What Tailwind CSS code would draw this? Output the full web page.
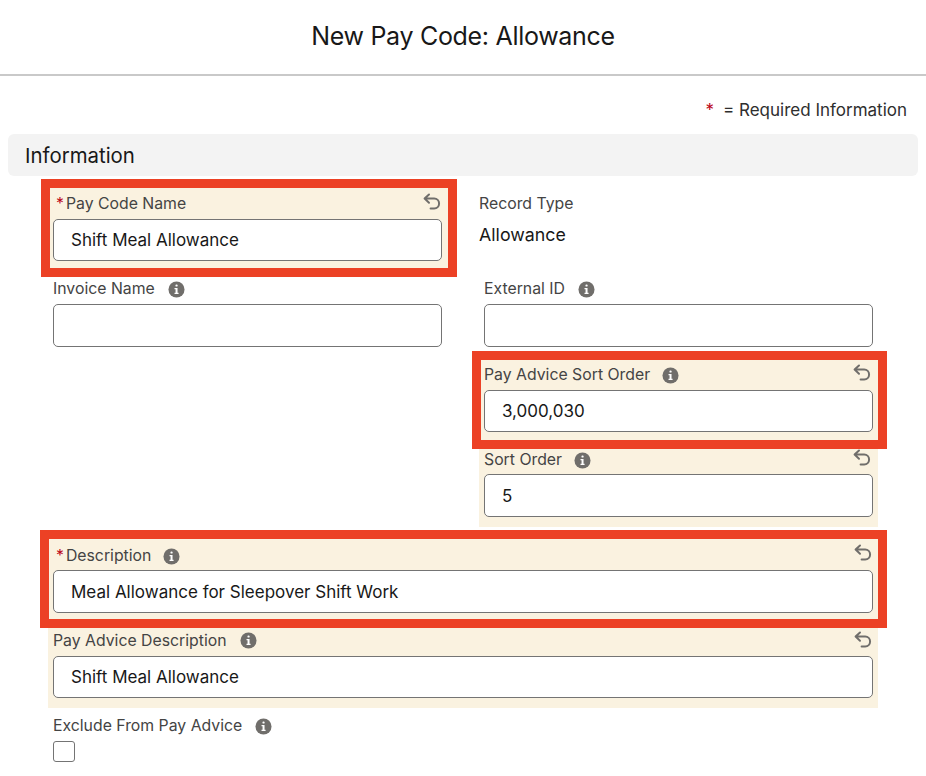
<!DOCTYPE html>
<html lang="en">
  <head>
    <meta charset="UTF-8" />
    <title>New Pay Code: Allowance</title>
    <script src="https://cdn.jsdelivr.net/npm/@tailwindcss/browser@4"></script>
  </head>
  <body class="bg-white font-['Inter',sans-serif] text-[#181818] overflow-hidden">
    <svg class="hidden">
      <symbol id="info" viewBox="0 0 18 18">
        <circle cx="9" cy="9" r="8.5" fill="#706e6b" />
        <rect x="7.9" y="3.6" width="2.3" height="2.3" rx="1" fill="#fff" />
        <path d="M6.9 7.4h3.2v5h1.1v1.3H6.9v-1.3H8v-3.7H6.9z" fill="#fff" />
      </symbol>
      <symbol id="undo" viewBox="0 0 18 18">
        <path d="M6 1.5 1.6 5.6 6 9.7M1.8 5.6h9.4a4.9 4.9 0 0 1 0 9.8H7.6" fill="none" stroke="#706e6b" stroke-width="2" stroke-linecap="round" stroke-linejoin="round" />
      </symbol>
    </svg>

    <header class="h-[76px] border-b-2 border-[#c9c9c9] flex items-center justify-center">
      <h1 class="text-[25px] tracking-[-0.3px]">New Pay Code: Allowance</h1>
    </header>

    <div class="h-[58px] pr-[19px] flex items-end justify-end pb-[12px] text-[17px] leading-[24px] text-[#2e2e2e]">
      <span class="text-[#ba0517] mr-[9px]">*</span>= Required Information
    </div>

    <section class="mx-[8px] h-[42px] px-[17px] pt-[3px] flex items-center bg-[#f3f3f3] rounded-[6px] text-[20.4px]">Information</section>

    <div class="ml-[48px] w-[830px] mt-[12px]">
      <div class="flex gap-[31px]">
        <!-- left column -->
        <div class="w-[400px]">
          <div class="relative bg-[#faf2e0] h-[80px] pl-[5px] pr-[6px]">
            <div class="h-[31px] pt-[1px] flex items-center text-[15.8px] text-[#444444]">
              <span class="text-[#ba0517] mr-[2px] ml-[3px]">*</span>Pay Code Name
            </div>
            <svg class="absolute right-[7px] top-[5px] w-[18px] h-[18px]"><use href="#undo" /></svg>
            <div class="h-[42px] px-[17px] pt-[2px] flex items-center bg-white border border-[#747474] rounded-[5px] text-[17px]">Shift Meal Allowance</div>
            <div class="absolute z-10 left-[-7px] right-[-9px] top-[-9px] bottom-[-9px] border-[9px] border-[#ec4125]"></div>
          </div>
          <div class="h-[92px] pl-[5px] pr-[6px]">
            <div class="h-[36px] pt-[6px] flex items-center text-[15.8px] text-[#444444]">
              Invoice Name
              <svg class="w-[17px] h-[17px] ml-[13px]"><use href="#info" /></svg>
            </div>
            <div class="h-[43px] bg-white border border-[#747474] rounded-[5px]"></div>
          </div>
        </div>

        <!-- right column -->
        <div class="w-[399px]">
          <div class="h-[80px]">
            <div class="h-[31px] pt-[1px] flex items-center text-[15.8px] text-[#444444]">Record Type</div>
            <div class="h-[30px] pt-[3px] flex items-center text-[17.8px]">Allowance</div>
          </div>
          <div class="h-[92px] px-[5px]">
            <div class="h-[36px] pt-[6px] flex items-center text-[15.8px] text-[#444444]">
              External ID
              <svg class="w-[17px] h-[17px] ml-[13px]"><use href="#info" /></svg>
            </div>
            <div class="h-[43px] bg-white border border-[#747474] rounded-[5px]"></div>
          </div>
          <div class="relative bg-[#faf2e0] h-[80px] px-[5px]">
            <div class="h-[30px] flex items-center text-[15.8px] text-[#444444]">
              Pay Advice Sort Order
              <svg class="w-[17px] h-[17px] ml-[12px]"><use href="#info" /></svg>
            </div>
            <svg class="absolute right-[7px] top-[4px] w-[18px] h-[18px]"><use href="#undo" /></svg>
            <div class="h-[42px] px-[17px] pt-[2px] flex items-center bg-white border border-[#747474] rounded-[5px] text-[17px]">3,000,030</div>
            <div class="absolute z-10 left-[-7px] right-[-9px] top-[-9px] bottom-[-9px] border-[9px] border-[#ec4125]"></div>
          </div>
          <div class="relative bg-[#faf2e0] h-[87px] px-[5px]">
            <div class="h-[34px] pt-[6px] flex items-center text-[15.8px] text-[#444444]">
              Sort Order
              <svg class="w-[17px] h-[17px] ml-[12px]"><use href="#info" /></svg>
            </div>
            <svg class="absolute right-[7px] top-[9px] w-[18px] h-[18px]"><use href="#undo" /></svg>
            <div class="h-[43px] px-[17px] pt-[2px] flex items-center bg-white border border-[#747474] rounded-[5px] text-[17px]">5</div>
          </div>
        </div>
      </div>

      <div class="relative bg-[#faf2e0] h-[80px] mt-[12px] px-[5px]">
        <div class="h-[31px] pt-[3px] flex items-center text-[15.8px] text-[#444444]">
          <span class="text-[#ba0517] mr-[2px] ml-[3px]">*</span>Description
          <svg class="w-[17px] h-[17px] ml-[12px]"><use href="#info" /></svg>
        </div>
        <svg class="absolute right-[6px] top-[5px] w-[18px] h-[18px]"><use href="#undo" /></svg>
        <div class="h-[43px] px-[17px] pt-[2px] flex items-center bg-white border border-[#747474] rounded-[5px] text-[17px]">Meal Allowance for Sleepover Shift Work</div>
        <div class="absolute z-10 left-[-8px] right-[-9px] top-[-9px] bottom-[-9px] border-[9px] border-[#ec4125]"></div>
      </div>

      <div class="bg-[#faf2e0] h-[89px] px-[5px] relative">
        <div class="h-[37px] pt-[6px] flex items-center text-[15.8px] text-[#444444]">
          Pay Advice Description
          <svg class="w-[17px] h-[17px] ml-[13px]"><use href="#info" /></svg>
        </div>
        <svg class="absolute right-[6px] top-[12px] w-[18px] h-[18px]"><use href="#undo" /></svg>
        <div class="h-[42px] px-[17px] pt-[2px] flex items-center bg-white border border-[#747474] rounded-[5px] text-[17px]">Shift Meal Allowance</div>
      </div>

      <div class="px-[5px]">
        <div class="h-[33px] pt-[3px] flex items-center text-[15.8px] text-[#444444]">
          Exclude From Pay Advice
          <svg class="w-[17px] h-[17px] ml-[13px]"><use href="#info" /></svg>
        </div>
        <div class="w-[22px] h-[21px] bg-white border border-[#747474] rounded-[3px]"></div>
      </div>
    </div>
  </body>
</html>
